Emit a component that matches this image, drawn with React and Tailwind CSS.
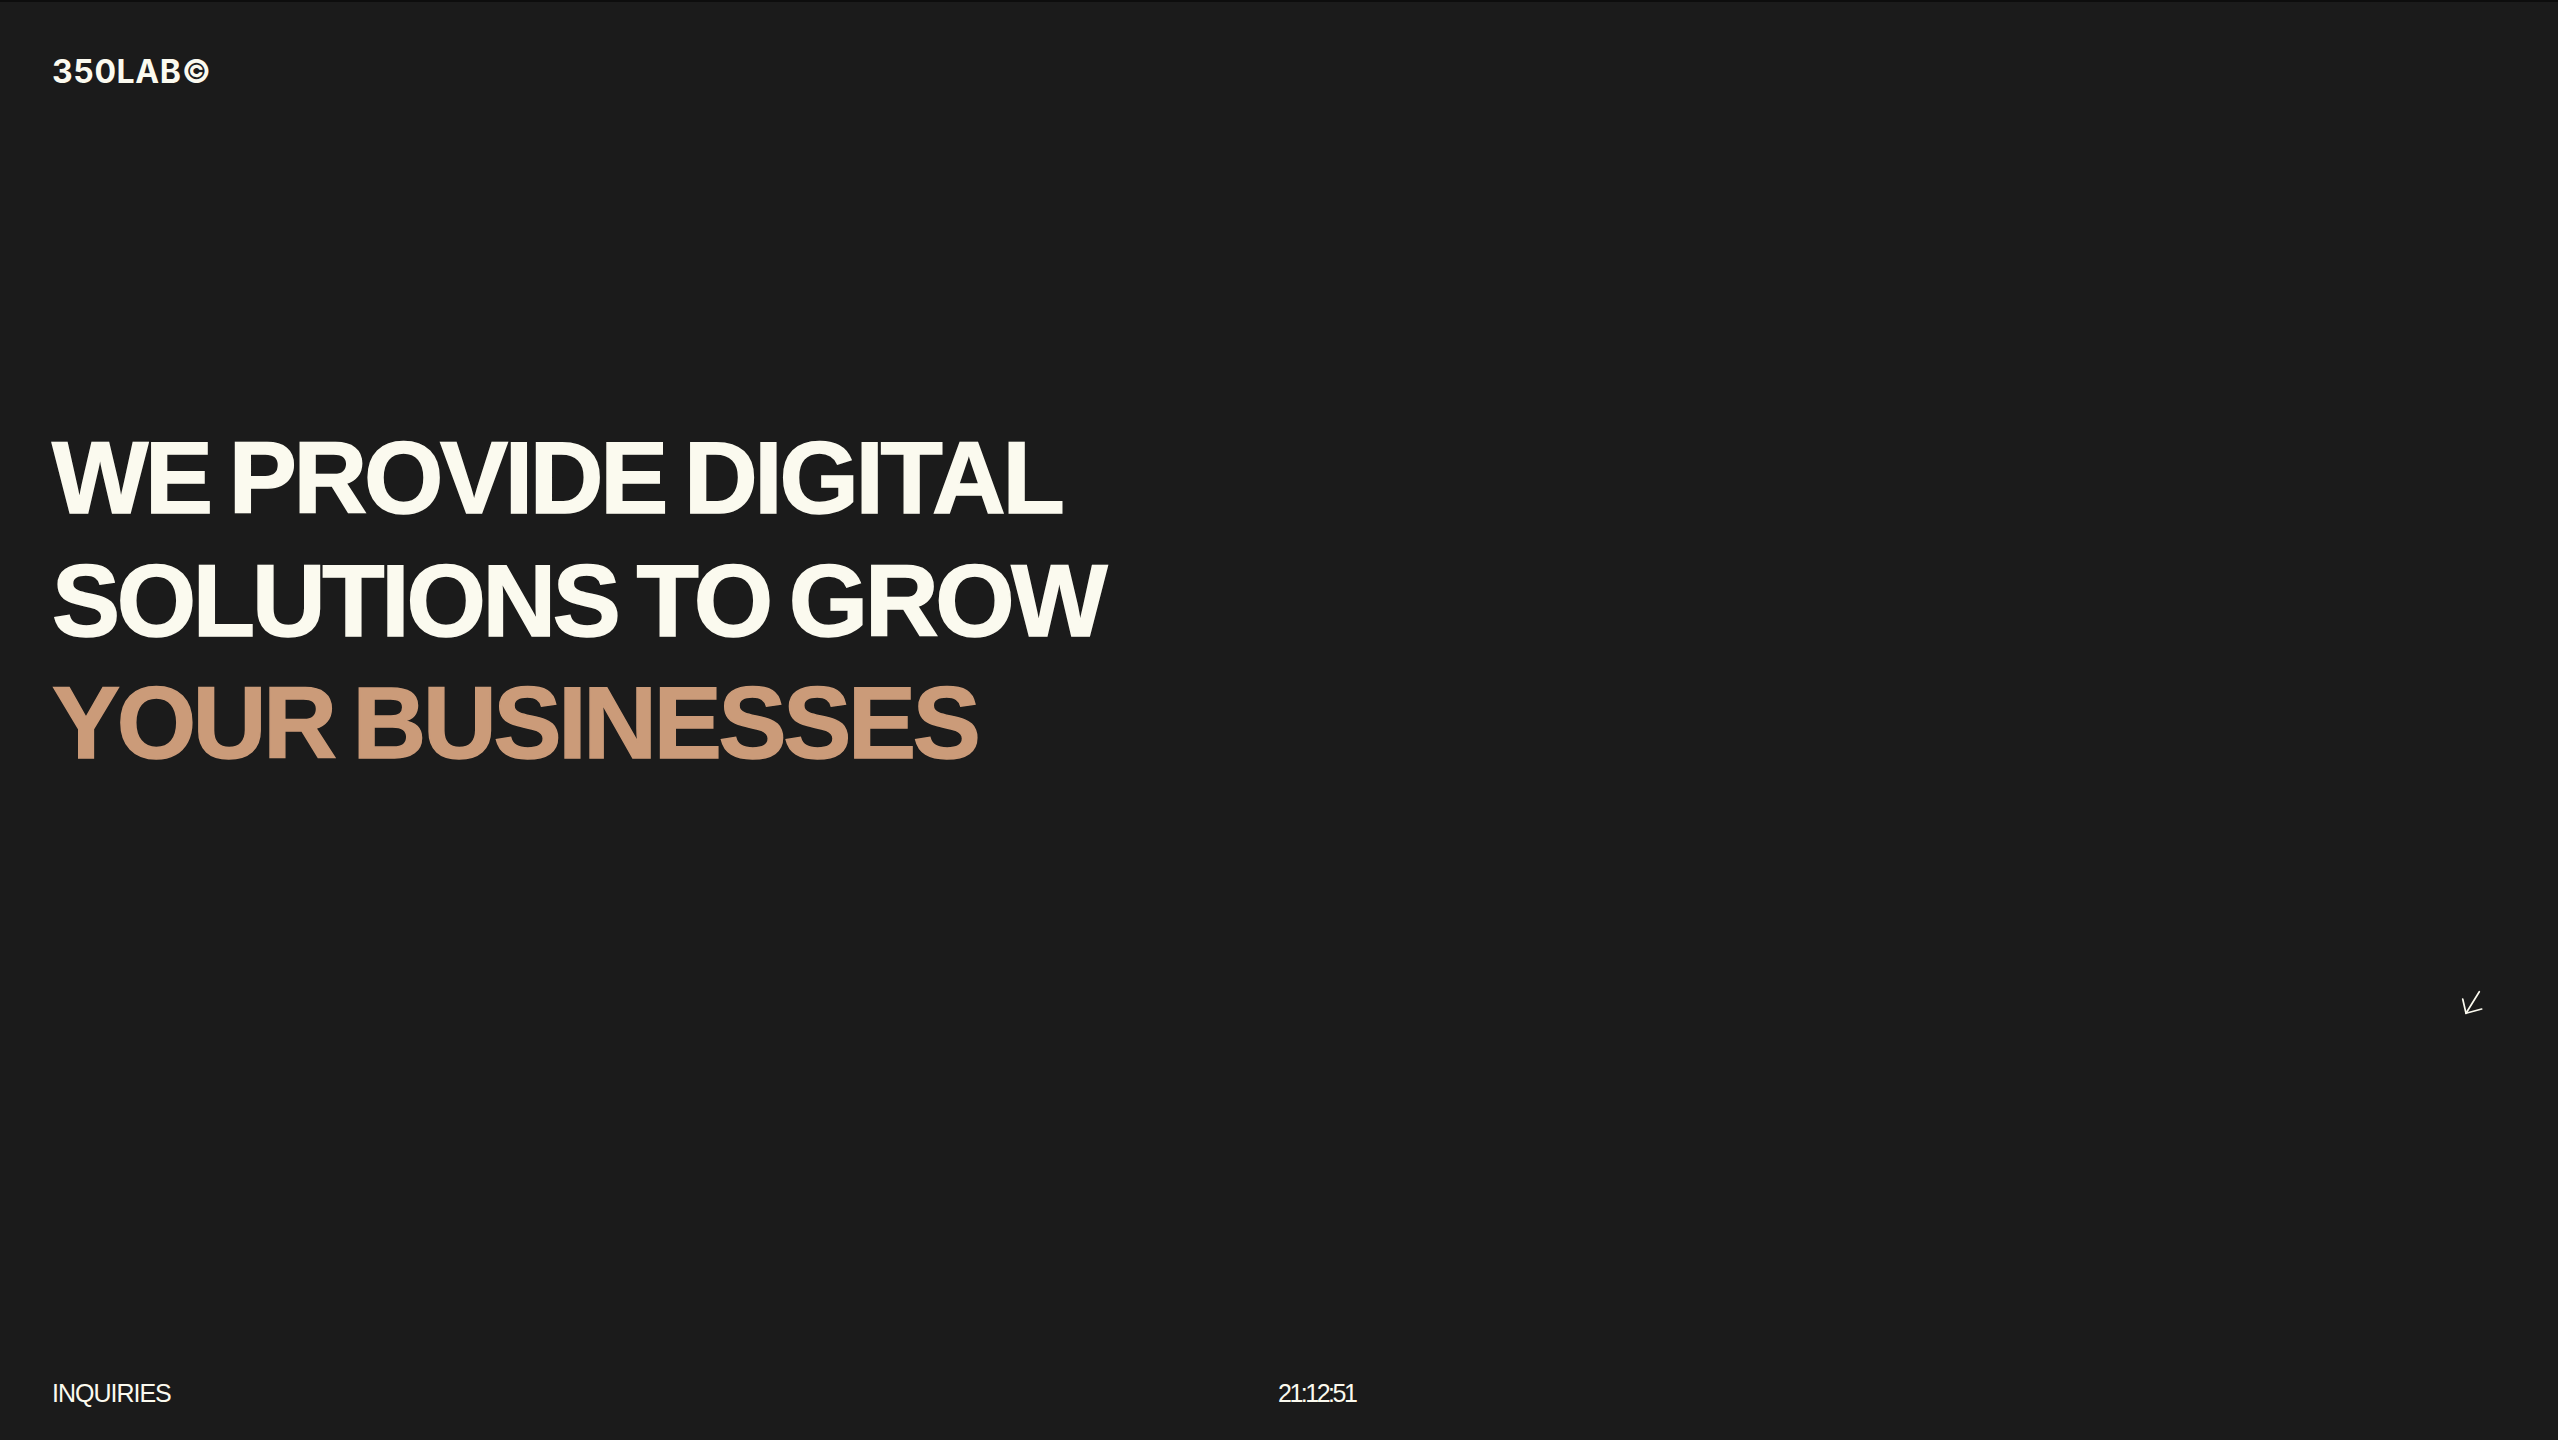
import { useState } from 'react';

const sans = { fontFamily: '"Liberation Sans", Arial, sans-serif' };

function ArrowDownLeft() {
  return (
    <svg width="26" height="28" viewBox="0 0 26 28" fill="none" className="text-[#fbfaef]">
      <path d="M21.3 3.7 8 25.3" stroke="currentColor" strokeWidth="1.7" strokeLinecap="round" />
      <path d="M4.7 11 8 25.3 23.7 21" stroke="currentColor" strokeWidth="1.7" strokeLinecap="round" strokeLinejoin="round" />
    </svg>
  );
}

export default function App() {
  // clock frozen at the screenshot's time
  const [time] = useState('21:12:51');

  return (
    <div
      style={sans}
      className="flex h-screen w-full flex-col border-t-2 border-[#0d0d0d] bg-[#1b1b1b] px-[52px] text-[#fbfaef]"
    >
      <header className="pt-[51px]">
        <div className="font-['Inter',sans-serif] text-[32px] font-bold leading-[38px] tracking-[0.02em]">350LAB©</div>
      </header>

      <main className="flex flex-1 flex-col">
        <h1 className="mt-[326px] text-[102px] font-bold uppercase leading-[122.5px] tracking-[-0.032em] [word-spacing:-0.06em] [-webkit-text-stroke:1.5px_currentcolor]">
          <span className="block">We provide digital</span>
          <span className="block">solutions to grow</span>
          <span className="block text-[#cb9b79]">your businesses</span>
        </h1>

        <div className="mt-[203px] flex justify-end pr-[22px]">
          <ArrowDownLeft />
        </div>
      </main>

      <footer className="grid grid-cols-2 pb-[32px] text-[25px] leading-[30px]">
        <a href="#" className="tracking-[-0.04em]">INQUIRIES</a>
        <span className="-ml-[1px] tracking-[-0.1em]">{time}</span>
      </footer>
    </div>
  );
}
